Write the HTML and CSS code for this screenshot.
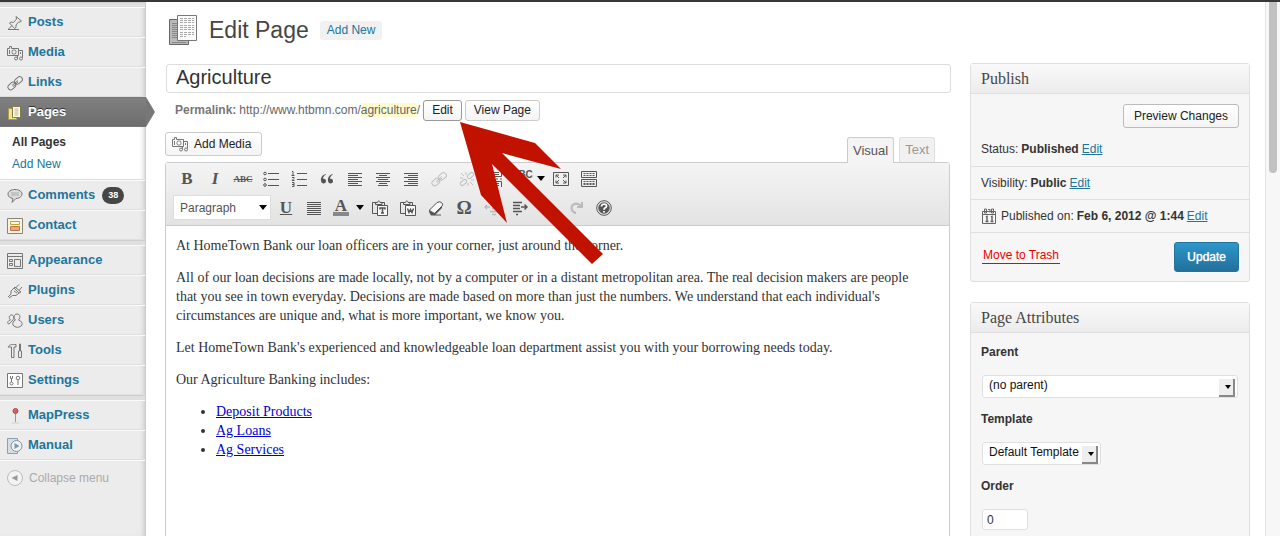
FILE: index.html
```html
<!DOCTYPE html>
<html lang="en">
<head>
<meta charset="utf-8">
<title>Edit Page</title>
<link rel="stylesheet" href="styles.css">
</head>
<body>
<svg class="defs" aria-hidden="true">
  <symbol id="camera" viewBox="0 0 16 16"><path d="M.5 3.500h2v-2h2v2h7v7H.5zM2.500 5v4M11.500 5.500h4v7M13.500 7v2"/><rect x="5" y="5" width="4" height="4" rx="1.500"/><circle cx="9" cy="13.500" r="1.500"/><circle cx="14" cy="13.500" r="1.500"/><path d="M10.500 13.500v-3"/></symbol>
  <symbol id="chain" viewBox="0 0 16 16"><rect x="7" y="2.500" width="8.500" height="5.500" rx="2.700" transform="rotate(-42 11.500 5)"/><rect x=".5" y="8.500" width="8.500" height="5.500" rx="2.700" transform="rotate(-42 4.500 11)"/><path d="M5 10.500l6-5M6 11.500l5-4.500"/></symbol>
  <symbol id="clip" viewBox="0 0 16 16"><path d="M5 13.500H.5v-11H4M10 2.500h2.500V5M3.500 4.500v-2h2C5.500.5 8 .5 8 2.500h2v2z"/><path class="paper" d="M5.500 5.500h10v10h-10z"/></symbol>
</svg>
<div class="topbar"></div>
<div class="page">
  <nav class="menu">
    <div class="separator"></div>
    <a class="item" href="#"><svg viewBox="0 0 16 16"><path d="M9 1.500l5.500 4.500-1.500 1-1.500 0-2.500 3 0 2.500-1.500 1L2.500 8 4 7l2.500.500L9.500 4zM5 10.500L1.500 14M1 14.500h11" /></svg>Posts</a>
    <a class="item" href="#"><svg><use href="#camera"/></svg>Media</a>
    <a class="item" href="#"><svg><use href="#chain"/></svg>Links</a>
    <a class="item current" href="#"><svg viewBox="0 0 16 16"><path fill="#f5e389" stroke="#ab9b50" d="M1.500 3.500h8v11h-8z"/><path fill="#fffce6" stroke="#817a51" d="M5.500 1.500h8v11h-8z"/><path stroke="#b4af91" d="M7.500 4h4M7.500 6h4M7.500 8h4M7.500 10h4"/></svg>Pages</a>
    <div class="submenu"><a class="active" href="#">All Pages</a><a href="#">Add New</a></div>
    <a class="item" href="#"><svg viewBox="0 0 16 16"><path fill="#ddd" d="M8 1.500c4 0 7 2 7 4.500s-3 4.500-6 4.500L5 14.500l1-4C3 10 1 8.500 1 6s3-4.500 7-4.500z"/><path stroke="#aaa" d="M4 5h8M4 7h8"/></svg>Comments <span class="count">38</span></a>
    <a class="item" href="#"><svg viewBox="0 0 16 16"><path fill="#f7f4e2" stroke="#898678" d="M.5.5h15v15H.5z"/><path stroke="#bba72c" d="M3.500 3.500h9v3h-9z"/><path fill="#eda77e" stroke="#bd754f" d="M3.500 8.500h9v4h-9z"/></svg>Contact</a>
    <div class="separator"></div>
    <a class="item" href="#"><svg viewBox="0 0 16 16"><path d="M.5.500h15v15H.5zM.5 3.500h15M2.500 6.500h3v2h-3zM2.500 10.500h3v2h-3zM7.500 6.500h6v7h-6z"/></svg>Appearance</a>
    <a class="item" href="#"><svg viewBox="0 0 16 16"><path d="M4 8l3-3 5 5-3 2.500H5.500L2 15M4 8v3l-3 3M7 5l1-1 6 5-2 1M8.500 5L12 1.500M12 7.500L15 4M7 8l3 2"/></svg>Plugins</a>
    <a class="item" href="#"><svg viewBox="0 0 16 16"><path d="M3.500 7C1.500 5 2 2 4.500 2S7 5 6 7L4 9 2 11c-2 0-2-3 1.500-4zM8.500 7c-2-2-2-6 1.500-6s3.500 4 1.500 6c3 1 4 3 3.500 5-2 3-7 3-9 0-.5-2 0-4 2.500-5z"/></svg>Users</a>
    <a class="item" href="#"><svg viewBox="0 0 16 16"><path d="M1 4c2-3 4-2.500 8-2.500V4H7v10.500H4.500V4zM12.500 1v7h-1v6.500h3V8h-1V1z"/></svg>Tools</a>
    <a class="item" href="#"><svg viewBox="0 0 16 16"><path fill="#fff" d="M.5 .500h15v14H.5z"/><path d="M3.500 3v2.500h2V3M4.500 6v3"/><circle cx="4.500" cy="10.500" r="1.500"/><circle cx="11" cy="5" r="1.800"/><path d="M11 7v5"/></svg>Settings</a>
    <div class="separator"></div>
    <a class="item" href="#"><svg viewBox="0 0 16 16"><path d="M8.500 5v9" stroke="#999"/><path d="M5 15h7" stroke="#ccc"/><circle cx="8.500" cy="3" r="2.500" fill="#cf6666" stroke="#a84c4c"/></svg>MapPress</a>
    <a class="item" href="#"><svg viewBox="0 0 16 16"><path fill="#d7dfe4" stroke="#8ba0b0" d="M.5.5h10v15H.5z"/><circle cx="9.500" cy="8" r="5.500" fill="#eef2f5" stroke="#8394a3"/><path fill="#7896ad" stroke="none" d="M7.500 5l5 3-5 3z"/></svg>Manual</a>
    <button class="collapse"><svg viewBox="0 0 16 16"><circle cx="8" cy="8" r="7.500" fill="#f3f3f3" stroke="#bbb"/><path fill="#999" stroke="none" d="M10.500 5v6l-6-3z"/></svg>Collapse menu</button>
  </nav>

  <main>
    <header class="title-bar">
      <svg class="page-icon" viewBox="0 0 30 32"><path fill="#b9b9b9" stroke="#666" d="M1.500 5.500h19v25h-19z"/><path stroke="#888" d="M4 9.500h5M4 11.500h5M4 13.500h5M4 15.500h5M4 17.500h5M4 19.500h5M4 21.500h5M4 23.500h5M4 28.500h14"/><path fill="#fafafa" stroke="#777" d="M9.500 1.500h19v25h-19z"/><path stroke="#aaa" stroke-dasharray="3 1" d="M12 4.500h14M12 6.500h14M12 8.500h14M12 11.500h14M12 13.500h14M12 15.500h14M12 18.500h14M12 20.500h14M12 22.500h6"/></svg>
      <h1>Edit Page</h1><a class="add-new" href="#">Add New</a>
    </header>
    <div class="columns">
      <section class="editor-column">
        <input class="post-title" type="text" value="Agriculture" aria-label="Title">
        <div class="permalink"><strong>Permalink:</strong><span>http://www.htbmn.com/<mark>agriculture</mark>/</span><button class="button dark">Edit</button><button class="button">View Page</button></div>
        <div class="editor-head">
          <button class="button media"><svg><use href="#camera"/></svg>Add Media</button>
          <div class="tabs"><button class="tab on">Visual</button><button class="tab">Text</button></div>
        </div>
        <div class="editor">
          <div class="toolbar">
            <div class="tools">
              <button class="tool"><b>B</b></button>
              <button class="tool"><i>I</i></button>
              <button class="tool abc"><s>ABC</s></button>
              <button class="tool" aria-label="Bulleted list"><svg viewBox="0 0 16 16"><circle cx="2" cy="2.500" r="1.300"/><circle cx="2" cy="8.500" r="1.300"/><circle cx="2" cy="14" r="1.300"/><path d="M5 2.500h11M5 8.500h11M5 14.500h11"/></svg></button>
              <button class="tool" aria-label="Numbered list"><svg viewBox="0 0 16 16"><path d="M1 .500h1V4M.5 4.500h3M1 6.500h2v1L1 9.500h2.500M1 11.500h2v4H1M1 13.500h2M6 2.500h10M6 8.500h10M6 14.500h10"/></svg></button>
              <button class="tool" aria-label="Quote"><svg viewBox="0 0 16 16"><path class="solid" d="M7 3C3 4 1.500 7 2 10c.5 3.500 5 3 5 .3C7 8 5 7.500 4 8c0-2 1-3.500 3-4.500zM14 3c-4 1-5.500 4-5 7 .5 3.500 5 3 5 .3 0-2.300-2-2.800-3-2.300 0-2 1-3.500 3-4.500z"/></svg></button>
              <button class="tool" aria-label="Align left"><svg viewBox="0 0 16 16"><path d="M1 2.500h14M1 4.500h10M1 6.500h14M1 8.500h10M1 10.500h14M1 12.500h10M1 14.500h14"/></svg></button>
              <button class="tool" aria-label="Align centre"><svg viewBox="0 0 16 16"><path d="M1 2.500h14M4 4.500h8M1 6.500h14M3 8.500h10M1 10.500h14M4 12.500h8M3 14.500h10"/></svg></button>
              <button class="tool" aria-label="Align right"><svg viewBox="0 0 16 16"><path d="M1 2.500h14M5 4.500h10M1 6.500h14M5 8.500h10M1 10.500h14M5 12.500h10M1 14.500h14"/></svg></button>
              <button class="tool" disabled aria-label="Link"><svg><use href="#chain"/></svg></button>
              <button class="tool" disabled aria-label="Unlink"><svg viewBox="0 0 16 16"><path d="M2 2l3 3M7 1v3M1 7h3"/><rect x="8" y="2.500" width="7" height="4" rx="2" transform="rotate(-42 11.500 4.500)"/><rect x="1" y="9.500" width="7" height="4" rx="2" transform="rotate(-42 4.500 11.500)"/><path d="M11 11l3 3M12 9h3M9 12v3"/></svg></button>
              <button class="tool" aria-label="Read more"><svg viewBox="0 0 16 16"><path d="M1.500 0v5.500h13V0M4 1.500h8M4 3.500h8M1 8h2M5 8h2M9 8h2M13 8h2M1.500 16v-5.500h13V16M4 12.500h8M4 14.500h8"/></svg></button>
              <button class="tool spell"><span class="letters">ABC</span></button><button class="caret" aria-label="Languages"></button>
              <button class="tool" aria-label="Full screen"><svg viewBox="0 0 16 16"><path d="M.5 1.500h15v13H.5zM3 6.500V4h3M3 4l3 3M13 6.500V4h-3M13 4l-3 3M3 9.500V12h3M3 12l3-3M13 9.500V12h-3M13 12l-3-3"/></svg></button>
              <button class="tool" aria-label="Kitchen sink"><svg viewBox="0 0 16 16"><path d="M.5.5h15v6H.5zM.5 8.500h15v7H.5z"/><path stroke-dasharray="2 1" d="M2.500 2.500h11M2.500 4.500h11M2.500 10.500h11"/><path stroke-dasharray="2 1" stroke-width="2" d="M2.500 13h11"/></svg></button>
            </div>
            <div class="tools">
              <label class="format"><select aria-label="Format"><option>Paragraph</option></select></label>
              <button class="tool"><u>U</u></button>
              <button class="tool" aria-label="Justify"><svg viewBox="0 0 16 16"><path d="M1 2.500h14M1 4.500h14M1 6.500h14M1 8.500h14M1 10.500h14M1 12.500h14M1 14.500h14"/></svg></button>
              <button class="tool spell"><span class="colour">A</span></button><button class="caret" aria-label="Colours"></button>
              <button class="tool" aria-label="Paste as text"><svg viewBox="0 0 16 16"><use href="#clip"/><path stroke-width="1.500" d="M8 9.500V8h5v1.500M10.500 8v5M9 13h3"/></svg></button>
              <button class="tool" aria-label="Paste from Word"><svg viewBox="0 0 16 16"><use href="#clip"/><path stroke-width="1.500" d="M7.500 8.500L9 12.500l1.500-3 1.500 3 1.500-4"/></svg></button>
              <button class="tool" aria-label="Remove formatting"><svg viewBox="0 0 16 16"><path class="paper" d="M1.500 10L9 2.500q3-2 5.500 1Q15 5 14 6l-7.500 7.500H3Q1 12 1.500 10z"/><path class="solid" d="M1.500 10l5 3L14 6v2l-6.500 6.500H13v1H3L1.500 13z"/></svg></button>
              <button class="tool omega">Ω</button>
              <button class="tool" disabled aria-label="Outdent"><svg viewBox="0 0 16 16"><path stroke-width="1.500" d="M6 2.500h9M8 5.500h7M8 8.500h7M6 11.500h9M8 14.500h4M6 7H1M3 5L1 7l2 2"/></svg></button>
              <button class="tool" aria-label="Indent"><svg viewBox="0 0 16 16"><path stroke-width="1.500" d="M1 2.500h9M1 5.500h7M1 8.500h7M1 11.500h9M4 14.500h2M9 7h6M12.500 4.500L15 7l-2.500 2.500"/></svg></button>
              <button class="tool" disabled aria-label="Undo"><svg viewBox="0 0 16 16"><path stroke-width="2" d="M2 3v5h5M3 7c4-5 11-3 10 5"/></svg></button>
              <button class="tool" disabled aria-label="Redo"><svg viewBox="0 0 16 16"><path stroke-width="2" d="M14 2v5H9M13 6C8 1 2 5 4 10c1 2 2 3 4 3"/></svg></button>
              <button class="tool" aria-label="Help"><svg viewBox="0 0 16 16"><circle cx="8" cy="8" r="7.300"/><circle class="solid" cx="8" cy="8" r="5.700"/><path stroke="#fff" stroke-width="1.800" d="M5.500 6.500c0-3.500 5.500-3 5-.2C10.200 8 8 7.800 8 9.700M8 11v1.500"/></svg></button>
            </div>
          </div>
          <article>
            <p>At HomeTown Bank our loan officers are in your corner, just around the corner.</p>
            <p>All of our loan decisions are made locally, not by a computer or in a distant metropolitan area. The real decision makers are people<br>that you see in town everyday. Decisions are made based on more than just the numbers. We understand that each individual's<br>circumstances are unique and, what is more important, we know you.</p>
            <p>Let HomeTown Bank's experienced and knowledgeable loan department assist you with your borrowing needs today.</p>
            <p>Our Agriculture Banking includes:</p>
            <ul><li><a href="#">Deposit Products</a></li><li><a href="#">Ag Loans</a></li><li><a href="#">Ag Services</a></li></ul>
          </article>
        </div>
        <svg class="pointer" viewBox="0 0 150 150" aria-hidden="true"><path d="M2 2l75 21 26 26-59-16 101 101-11 10L34 44l15 59-26-28z"/></svg>
      </section>

      <aside>
        <section class="box">
          <h2>Publish</h2>
          <div class="preview"><button class="button">Preview Changes</button></div>
          <div class="row first">Status: <strong>Published</strong> <a href="#">Edit</a></div>
          <div class="row">Visibility: <strong>Public</strong> <a href="#">Edit</a></div>
          <div class="row"><svg class="cal" viewBox="0 0 16 16"><path d="M1.500 3.500h13v12h-13zM2 6.500h12M3.500 1h2v4h-2zM10.500 1h2v4h-2zM7 1.500h2v3"/><path stroke-width="1.500" d="M5 9l1-.5v5M4.500 13.500h3M10 9l1-.5v5M9.500 13.500h3"/></svg>Published on: <strong>Feb 6, 2012 @ 1:44</strong> <a href="#">Edit</a></div>
          <div class="actions"><a class="trash" href="#">Move to Trash</a><button class="update">Update</button></div>
        </section>
        <section class="box">
          <h2>Page Attributes</h2>
          <div class="fields">
            <label for="parent">Parent</label>
            <div class="select wide"><select id="parent"><option>(no parent)</option></select></div>
            <label for="template">Template</label>
            <div class="select"><select id="template"><option>Default Template</option></select></div>
            <label for="order">Order</label>
            <input id="order" type="text" value="0">
          </div>
        </section>
      </aside>
    </div>
  </main>
  <div class="scrollbar"><div class="thumb"></div></div>
</div>
</body>
</html>
```

FILE: styles.css
```css
* { box-sizing: border-box; }
body { margin: 0; height: 100vh; overflow: hidden; display: flex; flex-direction: column; background: #fff; color: #333; font: 12px/18px "Liberation Sans", Arial, sans-serif; }
button, input, select { font: inherit; color: inherit; margin: 0; }
button { padding: 0; border: 0; background: none; }
svg { fill: none; stroke: #777; width: 16px; height: 16px; flex: none; }
.defs { position: absolute; width: 0; height: 0; }
.topbar { height: 2px; background: #3a3536; flex: none; }
.page { flex: 1; min-height: 0; display: grid; grid-template-columns: 146px 1fr 15px; }

.menu { display: flex; flex-direction: column; background: #ececec; border-right: 1px solid #ccc; box-shadow: inset -5px 0 5px -4px #c4c4c4; }
.separator { height: 5px; flex: none; background: #dfdfdf; border-top: 1px solid #cfcfcf; }
.item { height: 30px; flex: none; display: flex; align-items: center; gap: 5px; padding: 0 0 0 7px; border-top: 1px solid #fafafa; border-bottom: 1px solid #dedede; color: #21759b; font-size: 13px; font-weight: bold; text-decoration: none; }
.item svg { margin-top: 2px; }
.current { position: relative; background: linear-gradient(#808080, #6d6d6d); border-color: #777; color: #fff; margin-right: -1px; text-shadow: 0 -1px 0 #333; }
.current::after { content: ""; position: absolute; left: 100%; top: -1px; border: solid transparent; border-width: 15px 0 15px 9px; border-left-color: #777; }
.submenu { background: #fff; height: 53px; flex: none; padding: 4px 12px; display: flex; flex-direction: column; border-bottom: 1px solid #dedede; box-shadow: inset -5px 0 5px -4px #ccc; }
.submenu a { color: #21759b; text-decoration: none; line-height: 22px; }
.submenu .active { color: #333; font-weight: bold; }
.count { background: #464646; color: #fff; border-radius: 10px; font-size: 9px; line-height: 17px; padding: 0 6px; margin-left: 2px; }
.collapse { height: 35px; display: flex; align-items: center; gap: 6px; padding-left: 7px; border-top: 1px solid #fafafa; color: #aaa; }

main { padding: 0 15px 0 20px; display: flex; flex-direction: column; min-width: 0; min-height: 0; }
.title-bar { display: flex; align-items: center; height: 61px; padding: 0 0 5px 2px; flex: none; }
.page-icon { width: 30px; height: 32px; }
h1 { margin: 0 11px; font-size: 23px; line-height: 30px; font-weight: normal; color: #464646; }
.add-new { background: #f1f1f1; color: #21759b; border-radius: 3px; padding: 0 7px; line-height: 19px; text-decoration: none; }
.columns { flex: 1; min-height: 0; display: grid; grid-template-columns: 1fr 280px; gap: 19px; }
.editor-column { position: relative; display: flex; flex-direction: column; min-width: 0; padding-top: 1px; }
.post-title { height: 29px; width: 100%; border: 1px solid #ddd; border-radius: 3px; padding: 0 9px 3px; font-size: 20px; }
.permalink { display: flex; align-items: center; gap: 3px; height: 34px; padding-left: 9px; color: #666; }
.permalink strong { color: #777; }
mark { background: #fffbcc; color: inherit; }
.button { border: 1px solid #ccc; border-radius: 3px; background: linear-gradient(#fff, #f4f4f4); color: #222; height: 21px; line-height: 18px; padding: 0 8px; }
.dark { border-color: #999; }
.editor-head { display: flex; justify-content: space-between; align-items: flex-end; height: 35px; margin-left: -1px; padding-right: 16px; }
.media { height: 24px; display: flex; align-items: center; margin-bottom: 6px; gap: 6px; padding: 0 10px 0 6px; }
.tabs { display: flex; gap: 5px; }
.tab { height: 25px; padding: 0 5px; border: 1px solid #dfdfdf; border-bottom: 0; border-radius: 3px 3px 0 0; background: #f1f1f1; color: #999; font-size: 13px; }
.tab.on { position: relative; height: 26px; margin-bottom: -1px; border-color: #ccc; color: #555; background: #f4f4f4; }
.editor { flex: 1; border: 1px solid #ccc; border-radius: 3px 3px 0 0; min-height: 0; margin: 0 1px 0 -1px; }
.toolbar { height: 63px; padding: 1px 7px; border-bottom: 1px solid #ccc; background: linear-gradient(#f4f4f4, #e3e3e3); }
.tools { display: flex; align-items: center; height: 29px; }
.tool { width: 28px; height: 28px; flex: none; display: flex; align-items: center; justify-content: center; color: #555; font: 17px/20px "Liberation Serif", serif; }
.tool svg { stroke: #555; }
.tool:disabled { opacity: .3; }
.tool .solid { fill: #555; stroke: none; }
.paper { fill: #f7f7f7; }
.tool i, .tool u { font-weight: bold; }
.tool.abc { font-size: 9px; font-weight: bold; }
.tool.spell { width: 26px; font-weight: bold; }
.letters { font: bold 10px/10px "Liberation Sans", sans-serif; padding-bottom: 8px; }
.tool.omega { font-weight: bold; font-size: 19px; }
.colour { font-size: 17px; line-height: 13px; border-bottom: 4px solid #888; padding: 0 2px; }
.caret { width: 12px; height: 20px; display: flex; align-items: center; justify-content: center; }
.caret::after { content: ""; border: solid transparent; border-width: 5px 4px 0; border-top-color: #000; }
.format { position: relative; width: 98px; margin-right: 1px; }
.format select { appearance: none; display: block; width: 100%; height: 25px; border: 1px solid #ddd; background: #fff; padding: 0 6px; color: #555; }
.format::after { content: ""; position: absolute; right: 4px; top: 10px; border: solid transparent; border-width: 5px 4px 0; border-top-color: #000; pointer-events: none; }
article { padding: 10px; font: 14px/19px "Liberation Serif", serif; white-space: nowrap; }
article p { margin: 0 0 13px; }
article ul { margin: 0; padding-left: 40px; }
article a { color: #0000d5; }
.pointer { position: absolute; left: 292px; top: 57px; width: 150px; height: 150px; fill: #c11200; stroke: none; pointer-events: none; }

aside { display: flex; flex-direction: column; gap: 20px; min-width: 0; }
.box { border: 1px solid #dfdfdf; border-radius: 3px; background: #f6f6f6; }
.box h2 { margin: 0; height: 30px; padding: 0 10px; border-bottom: 1px solid #dfdfdf; background: linear-gradient(#f9f9f9, #ececec); font: 16px/29px "Liberation Serif", serif; color: #464646; }
.preview { display: flex; justify-content: flex-end; padding: 10px 10px 3px; }
.preview .button { height: 24px; padding: 0 10px; border-color: #bbb; }
.row { height: 33px; display: flex; align-items: center; gap: 3px; padding: 0 10px; border-bottom: 1px solid #dfdfdf; }
.row.first { height: 36px; }
.row a { color: #21759b; }
.cal { margin-right: 1px; stroke: #666; }
.actions { height: 48px; display: flex; align-items: center; justify-content: space-between; padding: 0 10px; }
.trash { color: #e00; text-decoration: none; border-bottom: 1px solid #e00; line-height: 16px; padding: 0 1px; margin: 0 1px 4px; }
.update { height: 30px; padding: 0 12px; border: 1px solid #21759b; border-radius: 3px; background: linear-gradient(#2e96cc, #22709a); color: #fff; text-shadow: 0 0 1px #fff; }
.fields { display: flex; flex-direction: column; align-items: flex-start; padding: 10px 11px; }
.fields label { font-weight: bold; margin: 0 -1px 14px; }
.select { position: relative; margin-bottom: 12px; }
.select.wide { width: 100%; }
.select select { appearance: none; display: block; width: 100%; height: 23px; border: 1px solid #dfdfdf; border-radius: 3px; background: #fff; padding: 0 20px 3px 6px; color: #111; }
.select::before { content: ""; position: absolute; right: 3px; top: 4px; width: 14px; height: 16px; background: #eee; border: solid #888; border-width: 0 2px 2px 0; pointer-events: none; }
.select::after { content: ""; position: absolute; right: 7px; top: 10px; border: solid transparent; border-width: 4px 3px 0; border-top-color: #000; pointer-events: none; }
#order { width: 46px; height: 21px; border: 1px solid #dfdfdf; border-radius: 3px; padding: 0 4px; }
.scrollbar { background: #f7f7f7; border-left: 1px solid #e2e2e2; padding: 0 3px; }
.thumb { height: 32%; background: #c1c1c1; border-radius: 0 0 4px 4px; }
```
